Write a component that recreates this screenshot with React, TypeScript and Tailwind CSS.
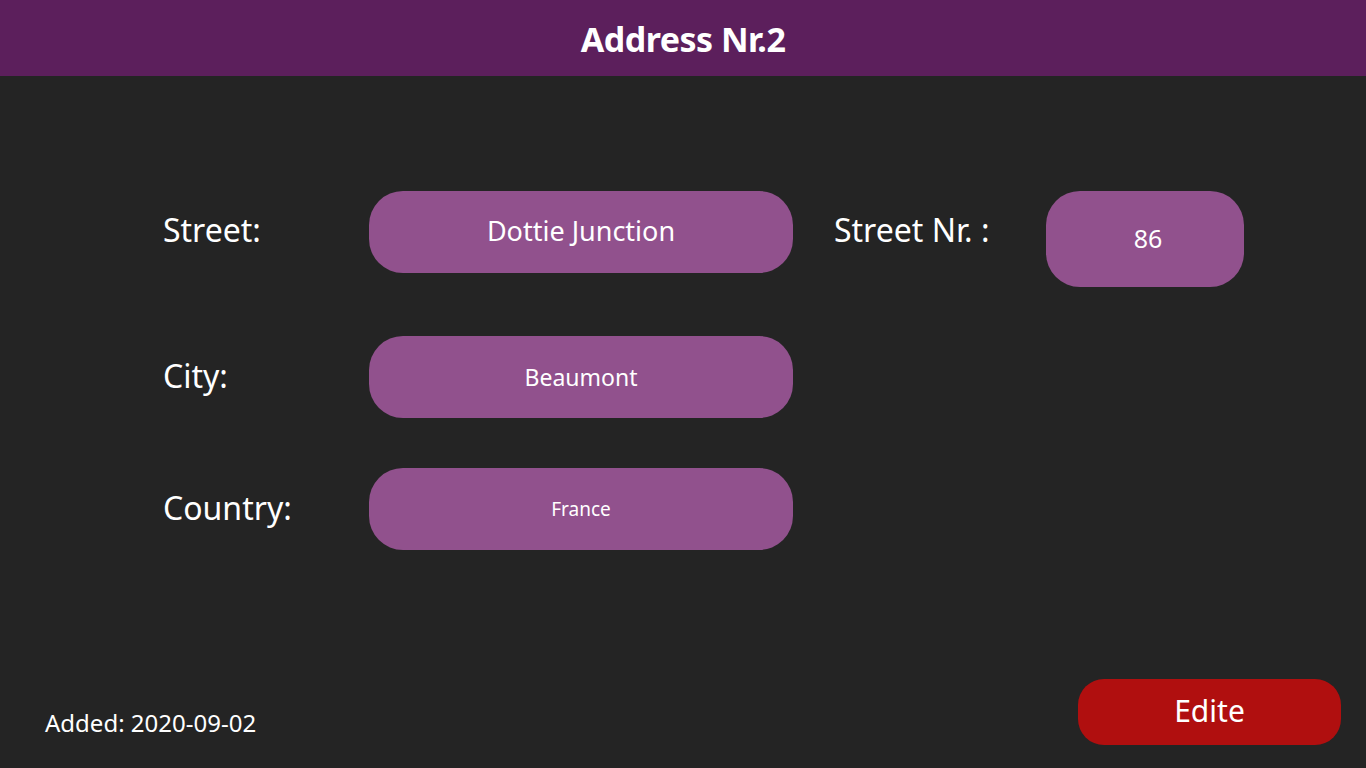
const font = { fontFamily: '"Noto Sans", "Open Sans", sans-serif' };

function Pill({ children, className }: { children: React.ReactNode; className: string }) {
  return (
    <div className={`flex items-center justify-center bg-[#91518d] text-white ${className}`}>
      {children}
    </div>
  );
}

export default function App() {
  return (
    <div className="flex h-[768px] w-[1366px] flex-col bg-[#242424] text-white" style={font}>
      <header className="flex h-[76px] items-center justify-center bg-[#5c1f5c]">
        <h1 className="pt-[2px] text-[34px] font-bold tracking-[-0.5px]">Address Nr.2</h1>
      </header>

      <main className="flex flex-1 flex-col pl-[163px] pt-[115px]">
        {/* Street row */}
        <div className="flex items-start">
          <div className="flex h-[82px] w-[206px] items-center pb-[4px] text-[32px]">Street:</div>
          <Pill className="h-[82px] w-[424px] rounded-[34px] pb-[2px] text-[27px]">Dottie Junction</Pill>
          <div className="ml-[41px] flex h-[82px] w-[212px] items-center pb-[4px] text-[32px]">Street Nr. :</div>
          <Pill className="h-[96px] w-[198px] rounded-[34px] pl-[6px] text-[25px]">86</Pill>
        </div>

        {/* City row */}
        <div className="mt-[49px] flex items-center">
          <div className="w-[206px] pb-[2px] text-[32px]">City:</div>
          <Pill className="h-[82px] w-[424px] rounded-[34px] text-[23px]">Beaumont</Pill>
        </div>

        {/* Country row */}
        <div className="mt-[50px] flex items-center">
          <div className="w-[206px] pb-[2px] text-[32px]">Country:</div>
          <Pill className="h-[82px] w-[424px] rounded-[34px] text-[19px]">France</Pill>
        </div>
      </main>

      <footer className="flex items-end justify-between pb-[23px] pl-[45px] pr-[25px]">
        <span className="mb-[4px] text-[24px]">Added: 2020-09-02</span>
        <button className="h-[66px] w-[263px] rounded-[26px] bg-[#b00f0f] pb-[4px] text-[30px] text-white">
          Edite
        </button>
      </footer>
    </div>
  );
}
